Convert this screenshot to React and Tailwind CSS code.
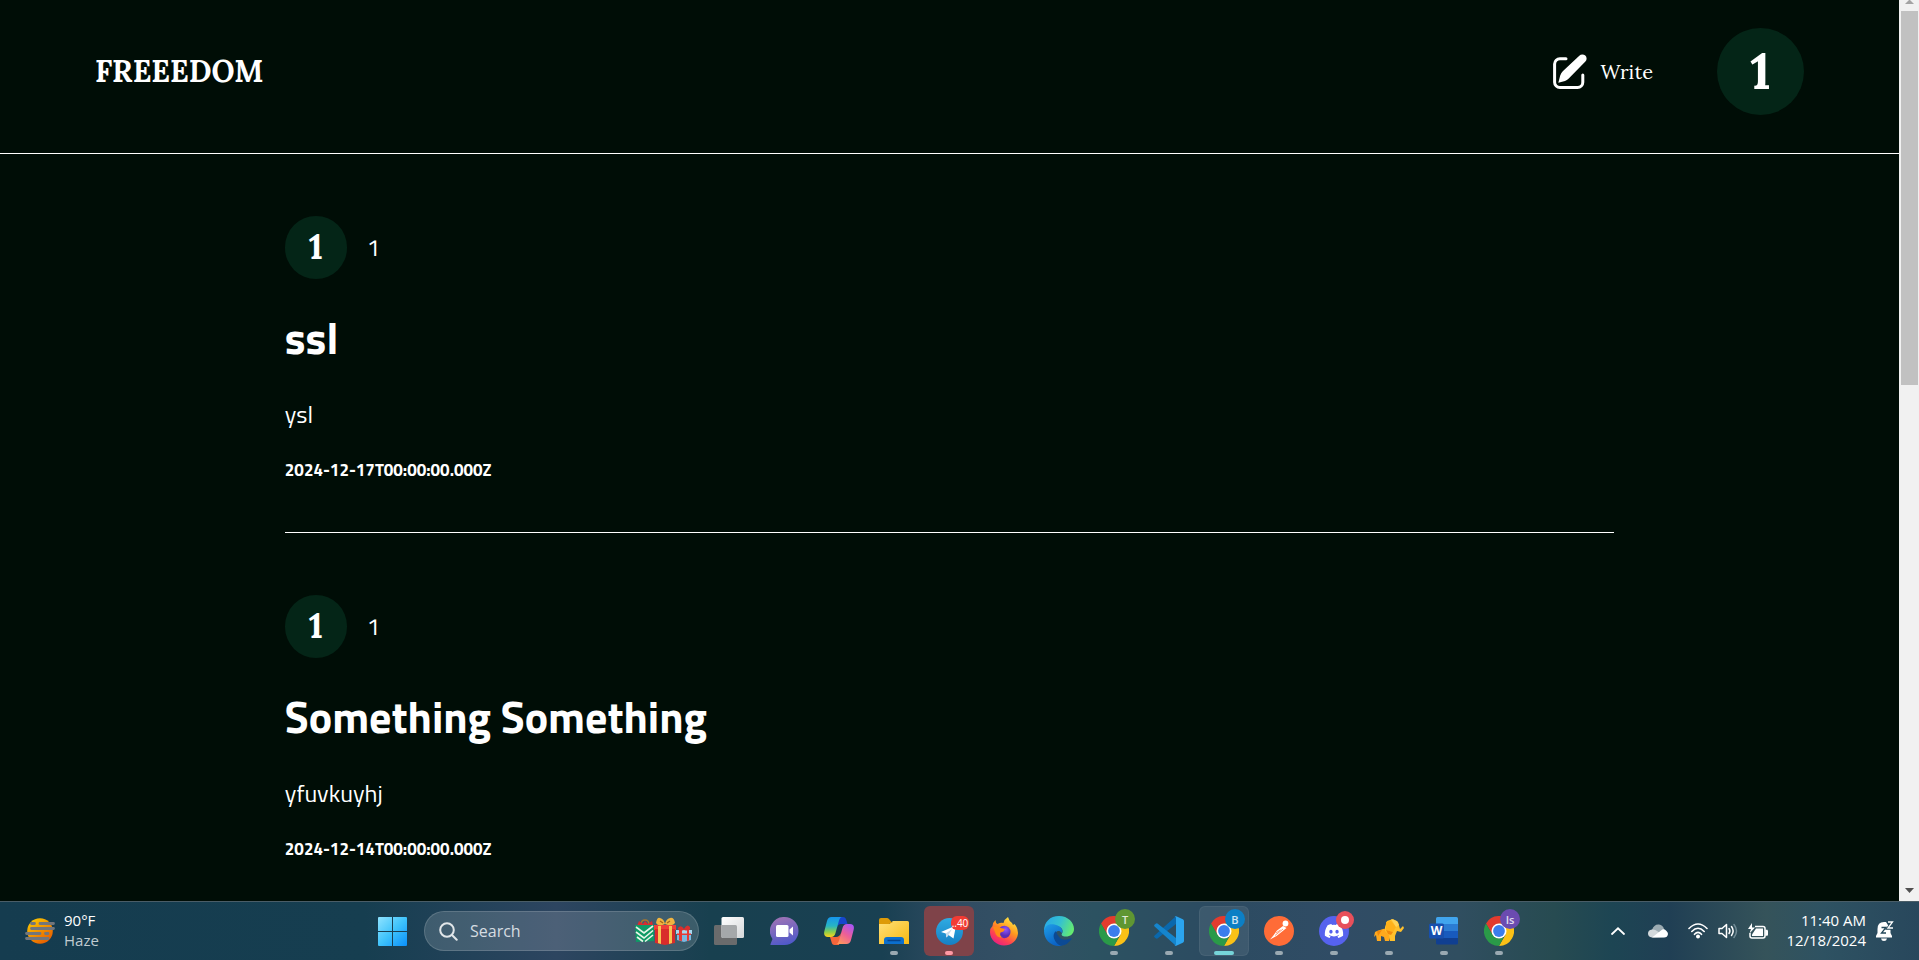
import React from "react";
import { FaDiscord } from "react-icons/fa";

const posts = [
  { id: 1, author: "1", title: "ssl", body: "ysl", date: "2024-12-17T00:00:00.000Z" },
  { id: 2, author: "1", title: "Something Something", body: "yfuvkuyhj", date: "2024-12-14T00:00:00.000Z" },
];

function WriteIcon() {
  return (
    <svg width="34" height="36" viewBox="0 0 34 36" aria-hidden="true">
      <path d="M13 4.700H7A5.300 5.300 0 0 0 1.600 10V28.200A5.300 5.300 0 0 0 7 33.500H24.500A5.300 5.300 0 0 0 29.800 28.200V21" fill="none" stroke="#fff" strokeWidth="3" strokeLinecap="round" />
      <path d="M5.300 28.800 7.200 21.500Q8 19 10 17L26.300 1.700A4.200 4.200 0 0 1 32.400 7.600L15.500 24.800Q14 26.300 12 27Z" fill="#fff" />
    </svg>
  );
}

function Header() {
  return (
    <header className="flex h-[154px] shrink-0 items-start justify-between border-b border-white px-[5%] pt-7">
      <a href="#home" className="flex h-[87px] items-center text-[30px] font-bold">FREEEDOM</a>
      <nav className="flex items-center">
        <a href="#write" className="flex items-center gap-3.5 text-xl">
          <WriteIcon />
          <span>Write</span>
        </a>
        <button type="button" aria-label="Profile" className="ml-16 flex size-[87px] items-center justify-center rounded-full bg-[#042517] pb-0.5 text-[51px] leading-none font-bold">1</button>
      </nav>
    </header>
  );
}

function Post({ post }) {
  return (
    <article className="h-[379px] border-b border-white pt-[62px] font-['Titillium_Web','Open_Sans',sans-serif]">
      <div className="flex items-center gap-5">
        <span className="flex h-[63px] w-[62px] items-center justify-center rounded-full bg-[#042517] pb-0.5 font-['Lora','Liberation_Serif',serif] text-[35px] leading-none font-bold">{post.author}</span>
        <span className="pb-0.5 text-2xl">{post.author}</span>
      </div>
      <h2 className="mt-7 text-[44px] leading-[62px] font-bold">{post.title}</h2>
      <p className="mt-[29px] text-2xl leading-8">{post.body}</p>
      <p className="mt-[29px] text-[17px] leading-[22px] font-bold">{post.date}</p>
    </article>
  );
}

function Scrollbar() {
  return (
    <div className="flex w-5 shrink-0 flex-col items-center justify-between bg-[#f1f1f1]" aria-hidden="true">
      <div className="flex w-full flex-col items-center">
        <svg width="9" height="11" viewBox="0 0 9 11"><path d="M0 4 4 0H5L9 4Z" fill="#a3a3a3" /></svg>
        <div className="h-[374px] w-[17px] bg-[#c1c1c1]" />
      </div>
      <svg width="9" height="14" viewBox="0 0 9 14"><path d="M0 1 4.500 6 9 1Z" fill="#505050" /></svg>
    </div>
  );
}

function Weather() {
  return (
    <svg width="30" height="26" viewBox="0 0 30 26" aria-hidden="true">
      <defs><linearGradient id="sun" x1="0" y1="0" x2=".7" y2="1"><stop stopColor="#ffd400" /><stop offset="1" stopColor="#e65c00" /></linearGradient></defs>
      <circle cx="15" cy="13" r="12.800" fill="url(#sun)" />
      <g stroke="#72767c" strokeWidth="2.800" strokeLinecap="round"><path d="M6.500 5.500H9.500M15 5.500H28.500M6.500 10.500H28.500M1.500 15.500H15M20.500 15.500H23M1.500 20.500H23" /></g>
    </svg>
  );
}

function StartIcon() {
  return (
    <svg width="29" height="29" viewBox="0 0 29 29" aria-hidden="true">
      <defs><linearGradient id="win" x1="0" y1="0" x2="29" y2="29" gradientUnits="userSpaceOnUse"><stop stopColor="#8fe3ff" /><stop offset=".5" stopColor="#3fc3fb" /><stop offset="1" stopColor="#0a90fb" /></linearGradient></defs>
      <g fill="url(#win)"><path d="M1 0H14V14H0V1Q0 0 1 0ZM15 0H28Q29 0 29 1V14H15ZM0 15H14V29H1Q0 29 0 28ZM15 15H29V28Q29 29 28 29H15Z" /></g>
    </svg>
  );
}

function Gifts() {
  return (
    <svg width="57" height="28" viewBox="0 0 57 28" aria-hidden="true">
      <path d="M6 8Q6 3 10 3T14 8" fill="none" stroke="#a8762f" strokeWidth="1.500" />
      <path d="M2 9 4 4 8 7 10 4 13 7 17 4 18 9Z" fill="#d92c2f" />
      <path d="M0 8H19V24L1 25Z" fill="#0f9a66" />
      <path d="M1 10 9 16 18 9M1 15 9 21 18 13.500M2 20 8 24.500M10 24.500 18 18" fill="none" stroke="#e8f5e9" strokeWidth="1.600" />
      <path d="M19 8H41V13H19Z" fill="#ef3f38" /><path d="M20 12H40V26L30 28 20 26Z" fill="#d92c2b" />
      <path d="M23 9H26V27L23 26ZM34 9H37V26L34 27Z" fill="#f6c453" />
      <path d="M30 7Q23 10 21 6 22 0 25 1 29 2 30 7ZM30 7Q37 10 40 6 39 0 35 1 31 2 30 7Z" fill="#f0b440" />
      <path d="M25 4 28 6M35 4 32 6" stroke="#a4641b" strokeWidth="1.300" />
      <path d="M41 13H57V17H41Z" fill="#a8d8ef" /><path d="M42 17H56V23L49 25 42 23Z" fill="#79b9e2" />
      <path d="M44 13H47V24L44 23.500Z" fill="#e53935" /><path d="M52 13H54V23.500L52 24ZM42 16.500H56V18H42Z" fill="#e53935" /><path d="M49 13Q43 15 43 11 46 7 49 12 52 6 55 10 56 15 49 13Z" fill="#d9302f" />
    </svg>
  );
}

function TaskView() {
  return (
    <svg width="30" height="28" viewBox="0 0 30 28" aria-hidden="true">
      <defs><linearGradient id="tv" x1="0" y1="0" x2="1" y2="1"><stop stopColor="#fff" /><stop offset="1" stopColor="#d5d7d9" /></linearGradient></defs>
      <rect y="8" width="23" height="20" rx="1.500" fill="#6a6b6c" /><rect x="7.500" width="22.500" height="21" rx="1.500" fill="url(#tv)" /><path d="M7.500 8H21.500Q23 8 23 9.500V21H9Q7.500 21 7.500 19.500Z" fill="#a5a8aa" />
    </svg>
  );
}

function MeetIcon() {
  return (
    <svg width="29" height="28" viewBox="0 0 29 28" aria-hidden="true">
      <defs><linearGradient id="meet" x1=".2" y1="0" x2=".5" y2="1"><stop stopColor="#a174b4" /><stop offset="1" stopColor="#5059c9" /></linearGradient></defs>
      <path d="M14.500 0A14 14 0 0 1 14.500 28H1Q0 28 .5 27L2.500 22A14 14 0 0 1 14.500 0Z" fill="url(#meet)" />
      <rect x="6" y="8" width="12.500" height="12" rx="1.500" fill="#fff" /><path d="M19.500 12.500 23 9.500V18.500L19.500 15.500Z" fill="#fff" />
    </svg>
  );
}

function Copilot() {
  return (
    <svg width="30" height="28" viewBox="0 0 30 28" aria-hidden="true">
      <defs>
        <linearGradient id="cpa" x1="0" y1="0" x2="0" y2="1"><stop stopColor="#1695ee" /><stop offset=".45" stopColor="#27b5c3" /><stop offset=".75" stopColor="#8ccf4a" /><stop offset="1" stopColor="#ffd21c" /></linearGradient>
        <linearGradient id="cpb" x1=".8" y1="0" x2=".2" y2="1"><stop stopColor="#a955f5" /><stop offset=".5" stopColor="#ee5f96" /><stop offset="1" stopColor="#ff9a5b" /></linearGradient>
      </defs>
      <path d="M15 0H19Q21.500 0 22.300 3L23.500 7H17Q14 7 13 11Z" fill="#1746cc" />
      <path d="M15 28H10.500Q8 28 7.500 25L6 20H12Q15.500 20 17 16Z" fill="#f4653a" />
      <path d="M7.500 0H18Q16 0 15 3.500L11.500 16Q10.500 20 7 20H4Q-1 20 .4 14L3 4Q4 0 7.500 0Z" fill="url(#cpa)" />
      <path d="M22.500 27H12Q14 27 15 23.500L18.500 11Q19.500 7 23 7H26Q31 7 29.600 13L27 23Q26 27 22.500 27Z" fill="url(#cpb)" />
    </svg>
  );
}

function Explorer() {
  return (
    <svg width="30" height="27" viewBox="0 0 30 27" aria-hidden="true">
      <defs><linearGradient id="fold" x1="0" y1="0" x2="1" y2="1"><stop stopColor="#ffe07a" /><stop offset="1" stopColor="#f9b90f" /></linearGradient></defs>
      <path d="M0 2Q0 0 2 0H8Q9 0 10 1L12.500 4H0Z" fill="#dd9a07" /><path d="M0 6H10L14 3H28.500Q30 3 30 4.500V26H0Z" fill="url(#fold)" /><path d="M0 4H14L10 6H0Z" fill="#dd9a07" />
      <path d="M5 26V22Q5 19 8 19H22Q25 19 25 22V26Z" fill="#0b6fce" /><path d="M8.500 22.500H21.500" stroke="#06448c" strokeWidth="1.500" />
    </svg>
  );
}

function Telegram() {
  return (
    <svg width="27" height="27" viewBox="0 0 27 27" aria-hidden="true">
      <defs><linearGradient id="tg" x1="0" y1="0" x2="0" y2="1"><stop stopColor="#2fabe2" /><stop offset="1" stopColor="#1680c4" /></linearGradient></defs>
      <circle cx="13.500" cy="13.500" r="13.500" fill="url(#tg)" /><path d="M5 14 20 7.500 17.500 20.500 12.500 17 10.500 19.500 9.800 15.500Z" fill="#fff" /><path d="M9.800 15.500 16 11 12.500 17 10.500 19.500Z" fill="#c5dced" />
    </svg>
  );
}

function Firefox() {
  return (
    <svg width="28" height="29" viewBox="0 0 28 29" aria-hidden="true">
      <defs><linearGradient id="ff" x1=".8" y1="0" x2=".2" y2="1"><stop stopColor="#fff14a" /><stop offset=".4" stopColor="#ff9a1f" /><stop offset=".7" stopColor="#ff4450" /><stop offset="1" stopColor="#e5188a" /></linearGradient><radialGradient id="ffp" cx=".6" cy=".3"><stop stopColor="#9059ff" /><stop offset="1" stopColor="#5b2db5" /></radialGradient></defs>
      <path d="M2.500 9Q3 5 5.500 3 5.500 6 7.500 7 11 5 13.500 6 14.500 2 18 0 19 4 22 6L23 8 24.500 7Q28 11 28 16C27.500 24 21 28.500 14 28.500S0 23 0 15Q0 11 2.500 9Z" fill="url(#ff)" />
      <circle cx="14.300" cy="15" r="6.200" fill="url(#ffp)" /><path d="M3 10Q7 8 11 11L15 12Q14 15 10.500 15.500 9 19 13 20.500 6 21 5 15Z" fill="#ff8b16" />
    </svg>
  );
}

function Edge() {
  return (
    <svg width="30" height="30" viewBox="0 0 30 30" aria-hidden="true">
      <defs><linearGradient id="edt" x1="0" y1=".3" x2="1" y2=".6"><stop stopColor="#27a9e8" /><stop offset=".5" stopColor="#35c1d0" /><stop offset="1" stopColor="#66eb6e" /></linearGradient><linearGradient id="edl" x1="0" y1="0" x2=".5" y2="1"><stop stopColor="#1f9fe8" /><stop offset="1" stopColor="#0b62c4" /></linearGradient></defs>
      <path d="M0 15C0 6 6 0 15 0S30 6.500 30 13C30 18 26 20.500 22 20.500 18 20.500 17 19 18 17.500 20 14 17 10 12 10 6 10 1 13 0 15Z" fill="url(#edt)" />
      <path d="M0 15C1 9 6 7.500 10.500 8.500 16 9.500 19.500 13 18 17 14 12 9.500 17 11 22 12 27 16 29.500 19 29.500 8 32 0 24 0 15Z" fill="url(#edl)" />
      <path d="M12 15Q8.500 18 10 22.500 12 28 17 29.800 24 29 27.800 22.500 27 22 25 23 19 25 15.500 21.500 12.500 18.500 12 15Z" fill="#0c4a94" />
    </svg>
  );
}

function Chrome() {
  return (
    <svg width="30" height="30" viewBox="0 0 30 30" aria-hidden="true">
      <path d="M2 7.500A15 15 0 0 1 28 7.500H15L8.500 18.700Z" fill="#e33b2e" />
      <path d="M28 7.500A15 15 0 0 1 15 30L21.500 18.750 15 7.500Z" fill="#fbc116" />
      <path d="M2 7.500 8.500 18.750Q11 22.500 15 22.500L19.500 21.500 15 30A15 15 0 0 1 2 7.500Z" fill="#2a9a48" />
      <circle cx="15" cy="15" r="7.500" fill="#fff" /><circle cx="15" cy="15" r="5.900" fill="#3b7ded" />
    </svg>
  );
}

function VSCode() {
  return (
    <svg width="30" height="30" viewBox="0 0 30 30" aria-hidden="true">
      <path d="M22 0 22 8 3.500 22.500Q2.500 23 1.700 22.300L.5 21.200Q-.3 20.400 .6 19.500L21 1Z" fill="#0a68ad" />
      <path d="M22 30V22L3.500 7.500Q2.500 7 1.700 7.700L.5 8.800Q-.3 9.600 .6 10.500L21 29Z" fill="#1585cd" />
      <path d="M20.500 .8Q21.500-.2 22.800 .4L28.800 3.200Q30 3.800 30 5V25Q30 26.200 28.800 26.800L22.800 29.600Q21.500 30.200 20.500 29.200 22 29.500 22 28V2Q22 .5 20.500 .8Z" fill="#2ba4ee" />
    </svg>
  );
}

function Postman() {
  return (
    <svg width="30" height="30" viewBox="0 0 30 30" aria-hidden="true">
      <circle cx="15" cy="15" r="15" fill="#ff6c37" /><circle cx="21.500" cy="7.500" r="2.900" fill="#fff" />
      <path d="M19 10 22.500 12 12.500 20 6 23.500 9 20 13 14.500Z" fill="#fff" /><path d="M12 17 16.500 14M11 19.500 19 13" stroke="#ff6c37" strokeWidth=".7" />
    </svg>
  );
}

function Discord() {
  return (
    <span className="flex size-[30px] items-center justify-center rounded-full bg-[#5662ee] text-xl text-white"><FaDiscord aria-hidden="true" /></span>
  );
}

function Elephant() {
  return (
    <svg width="30" height="24" viewBox="0 0 30 24" aria-hidden="true">
      <path d="M3 12 9 10 14 9 17 15 15 22H11L10 18 7 17V22H3L2 16 0 18 1 13Z" fill="#ffa91d" />
      <path d="M11 8 13 2 19 0 24 3 26 10 29 7 30 9 27 13 23 12 21 17V22H16L15 16 11 12Z" fill="#ffc02b" />
      <path d="M12 3 17 2 22 8 19 13 12 11Z" fill="#ffb11a" /><path d="M12 11 19 13 17 16 14 15ZM3 12 8 11 4 17Z" fill="#f28a0c" /><path d="M17 0 22 8 25 6 23 2Z" fill="#ffd257" />
    </svg>
  );
}

function Word() {
  return (
    <span className="relative block" aria-hidden="true">
      <svg className="block" width="30" height="28" viewBox="0 0 30 28">
        <path d="M7 1.500Q7 0 8.500 0H27.500Q29 0 29 1.500V7H7Z" fill="#41a5ee" /><path d="M7 7H29V14H7Z" fill="#2b7cd3" /><path d="M7 14H29V21H7Z" fill="#185abd" /><path d="M7 21H29V26Q29 27.500 27.500 27.500H8.500Q7 27.500 7 26Z" fill="#103f91" />
        <rect y="6.500" width="15" height="15" rx="1.500" fill="#174fae" />
      </svg>
      <span className="absolute top-[7px] left-0 w-[15px] text-center text-xs leading-[14px] font-bold text-white">W</span>
    </span>
  );
}

function Badge({ className, children }) {
  return <span className={"absolute top-[3px] left-[26px] flex size-5 items-center justify-center rounded-full text-[11px] leading-none font-semibold text-white/80 " + className}>{children}</span>;
}

const apps = [
  { name: "Task View", icon: <TaskView /> },
  { name: "Chat", icon: <MeetIcon /> },
  { name: "Copilot", icon: <Copilot /> },
  { name: "File Explorer", icon: <Explorer />, mark: "w-2 bg-[#9aa9b2]" },
  { name: "Telegram", icon: <Telegram />, mark: "w-2 bg-[#ff99a4]", tile: "bg-[#7f4349]", badge: <span className="absolute top-2.5 left-[27px] flex h-3.5 w-[18px] items-center justify-center rounded-md bg-[#f23c34] text-[10px] leading-none text-white">..40</span> },
  { name: "Firefox", icon: <Firefox /> },
  { name: "Edge", icon: <Edge /> },
  { name: "Chrome T", icon: <Chrome />, mark: "w-2 bg-[#9aa9b2]", badge: <Badge className="bg-[#5f9632]">T</Badge> },
  { name: "Visual Studio Code", icon: <VSCode />, mark: "w-2 bg-[#9aa9b2]" },
  { name: "Chrome B", icon: <Chrome />, mark: "w-5 bg-[#76d4d9]", tile: "bg-white/8 ring-1 ring-inset ring-white/5", badge: <Badge className="bg-[#0c7fc5]">B</Badge> },
  { name: "Postman", icon: <Postman />, mark: "w-2 bg-[#9aa9b2]" },
  { name: "Discord", icon: <Discord />, mark: "w-2 bg-[#9aa9b2]", badge: <span className="absolute top-[5px] left-[27px] flex size-[18px] items-center justify-center rounded-full bg-[#e8505b]"><span className="size-2 rounded-full bg-white" /></span> },
  { name: "TablePlus", icon: <Elephant />, mark: "w-2 bg-[#9aa9b2]" },
  { name: "Word", icon: <Word />, mark: "w-2 bg-[#9aa9b2]" },
  { name: "Chrome Is", icon: <Chrome />, mark: "w-2 bg-[#9aa9b2]", badge: <Badge className="bg-[#6b4bb0]">Is</Badge> },
];

function Tray() {
  return (
    <div className="flex items-center text-white">
      <button type="button" aria-label="Show hidden icons"><svg className="block" width="14" height="8" viewBox="0 0 14 8"><path d="M1 7 7 1.300 13 7" fill="none" stroke="#fff" strokeWidth="1.800" strokeLinecap="round" /></svg></button>
      <svg className="ml-[23px]" width="20" height="14" viewBox="0 0 20 14" aria-hidden="true"><path d="M4 6Q6 0 11 .5 15 1 16 5L19 9H2Z" fill="#9cabb2" /><path d="M4 13.500Q0 13 0 9.500 0 6 4 5.500 7 5 9 7L12 9 18 13Z" fill="#d3d9dc" /><path d="M4 13.500 13 6.500Q16 4 18.500 7 20 8.500 20 10 19.500 13.500 16 13.500Z" fill="#fff" /></svg>
      <button type="button" aria-label="Network, volume and battery" className="ml-5 flex items-center gap-2.5">
        <svg width="20" height="16" viewBox="0 0 20 16" fill="none" stroke="#fff" strokeWidth="1.600" strokeLinecap="round"><path d="M1 5.500Q10-3.500 19 5.500M3.800 8.500Q10 2 16.200 8.500M6.500 11.300Q10 7.500 13.500 11.300" /><circle cx="10" cy="13.500" r="1.200" fill="#fff" /></svg>
        <svg width="20" height="16" viewBox="0 0 20 16" fill="none" stroke="#fff" strokeWidth="1.500" strokeLinecap="round" strokeLinejoin="round"><path d="M1 5.500H4L8.500 1.500V14.500L4 10.500H1ZM11 5.500Q12.800 8 11 10.500M13.500 3.500Q16.800 8 13.500 12.500" /><path d="M16 1.500Q21 8 16 14.500" stroke="#718b95" /></svg>
        <svg width="20" height="17" viewBox="0 0 20 17" fill="none" stroke="#fff" strokeWidth="1.500"><path d="M7 3.500H15Q17 3.500 17 5.500V13Q17 15 15 15H4Q2 15 2 13V10" /><path d="M8 5.500H15V13H4V11.500Z" fill="#fff" stroke="none" /><path d="M18 7.500H19Q20 9.500 19 12H18Z" fill="#fff" /><path d="M4 0 0 6H3L1.500 10.500 7 4.500H4Z" fill="#fff" stroke="none" /></svg>
      </button>
      <button type="button" className="ml-[18px] pb-0.5 text-right text-[15px] leading-5"><span className="block">11:40 AM</span><span className="block">12/18/2024</span></button>
      <button type="button" aria-label="Notifications" className="ml-2.5">
        <svg className="block" width="18" height="20" viewBox="0 0 18 20"><path d="M8 1Q1.500 1 1.500 8V12L0 15V16.500H16V15L14.500 12V8L10 1ZM5 17.500H11Q10.500 20 8 20T5 17.500Z" fill="#fff" /><path d="M5.500 6.500H10L5.500 12H10" fill="none" stroke="#24485a" strokeWidth="1.300" /><path d="M11.500 1.500H16L11.500 7.500H16.500" fill="none" stroke="#24485a" strokeWidth="2.500" /><path d="M12 1H16.500L12 7H17" fill="none" stroke="#fff" strokeWidth="1.300" /></svg>
      </button>
    </div>
  );
}

function Taskbar() {
  return (
    <footer className="grid h-[59px] shrink-0 grid-cols-[1fr_auto_1fr] items-center border-t border-[#4a5d67] bg-[linear-gradient(90deg,#153c4f_0%,#163e50_19%,#2d4560_29%,#18404f_37%,#194052_46%,#314c62_50%,#335064_53%,#2c5261_57%,#2c4b61_63%,#304c65_70%,#304e60_76%,#274b51_81%,#1d4553_84%,#203f54_87%,#35535a_92%,#2e5262_95%,#28475c_100%)] font-['Segoe_UI','Open_Sans',sans-serif]">
      <button type="button" className="flex items-center gap-[9px] justify-self-start pl-[25px] text-left text-[15px] leading-5 text-white">
        <Weather />
        <span className="pb-0.5"><span className="block">90°F</span><span className="block text-[#c0cbd1]">Haze</span></span>
      </button>
      <div className="flex items-center pr-7">
        <button type="button" aria-label="Start" className="flex h-[50px] w-[50px] items-center justify-center"><StartIcon /></button>
        <label className="mr-[5px] ml-[7px] flex h-10 w-[275px] items-center rounded-full border border-white/15 bg-white/15 pr-1.5 pl-3.5">
          <svg width="19" height="19" viewBox="0 0 19 19" fill="none" stroke="#e1e6e9" strokeWidth="2" strokeLinecap="round" aria-hidden="true"><circle cx="8" cy="8" r="6.800" /><path d="M13 13 17.700 17.700" /></svg>
          <input aria-label="Search" placeholder="Search" className="ml-3 w-0 flex-1 bg-transparent text-base text-white outline-none placeholder:text-[#d5dce1]" />
          <Gifts />
        </label>
        <div className="flex gap-[5px]">
          {apps.map((app) => (
            <button type="button" key={app.name} aria-label={app.name} className={"relative flex size-[50px] items-center justify-center rounded-md " + (app.tile || "")}>
              {app.icon}
              {app.badge}
              {app.mark && <span className={"absolute bottom-px left-1/2 h-1 -translate-x-1/2 rounded-full " + app.mark} />}
            </button>
          ))}
        </div>
      </div>
      <div className="justify-self-end pr-[25px]"><Tray /></div>
    </footer>
  );
}

export default function App() {
  return (
    <div className="flex h-screen flex-col overflow-hidden bg-[#000d06] font-['Lora','Liberation_Serif',serif] text-white">
      <div className="flex min-h-0 flex-1">
        <div className="min-w-0 flex-1 overflow-hidden">
          <Header />
          <main className="px-[15%]">
            {posts.map((post) => <Post key={post.id} post={post} />)}
          </main>
        </div>
        <Scrollbar />
      </div>
      <Taskbar />
    </div>
  );
}
